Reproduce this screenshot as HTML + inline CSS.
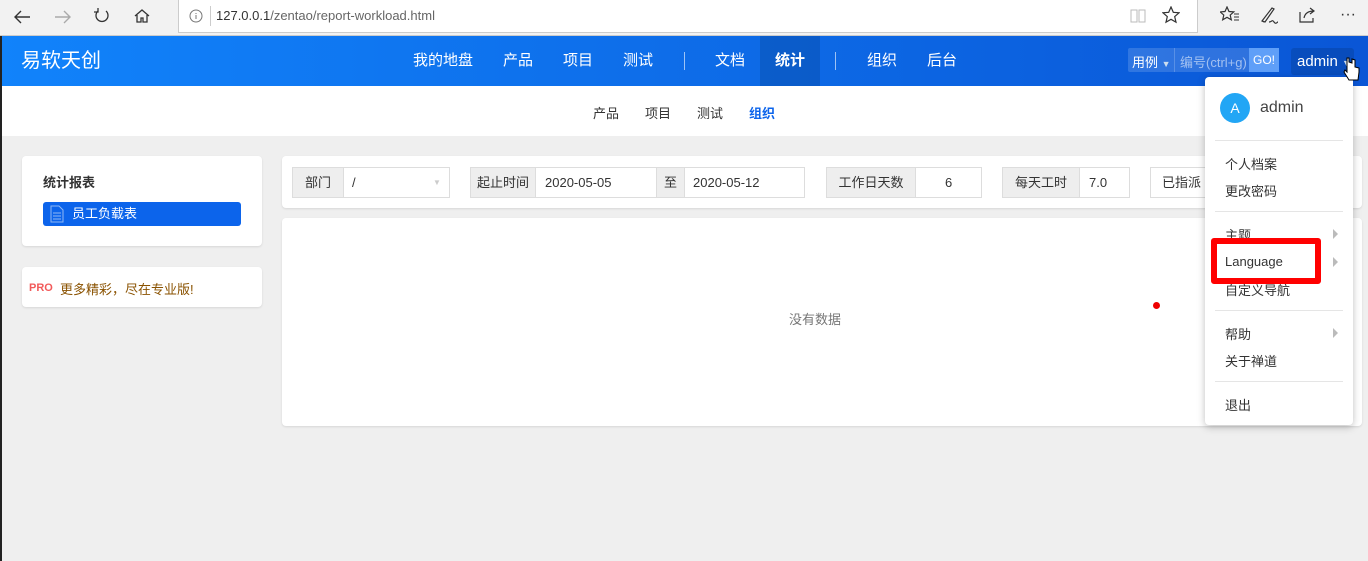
<!DOCTYPE html>
<html><head><meta charset="utf-8"><style>
*{margin:0;padding:0;box-sizing:border-box}
body{width:1368px;height:561px;overflow:hidden;background:#efefef;font-family:"Liberation Sans","Noto Sans CJK SC",sans-serif;font-size:13px;color:#333;position:relative}
.abs{position:absolute}
#bar{left:0;top:0;width:1368px;height:36px;background:#f2f2f2;border-bottom:1px solid #ccc}
#addr{left:178px;top:0;width:1020px;height:33px;background:#fff;border:1px solid #ccc;border-top:none}
#hdr{left:0;top:36px;width:1368px;height:50px;background:linear-gradient(90deg,#1183fb,#0a56d6)}
#hdr .n{position:absolute;top:0;line-height:50px;color:#fff;font-size:15px}
#sub{left:0;top:86px;width:1368px;height:50px;background:#fff}
#sub span{position:absolute;top:17px;font-size:13px;color:#333}
.card{position:absolute;background:#fff;border-radius:4px;box-shadow:0 1px 2px rgba(0,0,0,.1)}
.ig{position:absolute;top:167px;height:31px;border:1px solid #ddd;background:#fff;font-size:13px}
.ig .l{position:absolute;top:0;height:29px;line-height:29px;background:#eee;text-align:center;color:#333}
.ig .v{position:absolute;top:0;line-height:29px}
.menu{left:1205px;top:77px;width:148px;height:348px;background:#fff;border-radius:4px;box-shadow:0 2px 8px rgba(0,0,0,.25)}
.mi{position:absolute;left:20px;font-size:13px;color:#333}
.sep{position:absolute;left:10px;width:128px;height:1px;background:#e5e5e5}
.tri{position:absolute;left:128px;width:0;height:0;border-left:5px solid #bbb;border-top:5px solid transparent;border-bottom:5px solid transparent}
</style></head><body>
<div id="bar" class="abs">
<svg class="abs" style="left:12px;top:8px" width="20" height="18"><path d="M18 9H3M9 3L3 9l6 6" stroke="#333" stroke-width="1.4" fill="none"/></svg>
<svg class="abs" style="left:53px;top:8px" width="20" height="18"><path d="M2 9h15M11 3l6 6-6 6" stroke="#aaa" stroke-width="1.4" fill="none"/></svg>
<svg class="abs" style="left:93px;top:7px" width="18" height="18"><path d="M13 4a6 6 0 1 1-8 0M5 1v4H1" stroke="#333" stroke-width="1.3" fill="none"/></svg>
<svg class="abs" style="left:133px;top:7px" width="18" height="18"><path d="M2 9L9 3l7 6M4 8v7h4v-4h2v4h4V8" stroke="#333" stroke-width="1.3" fill="none"/></svg>
</div>
<div id="addr" class="abs">
<svg class="abs" style="left:10px;top:9px" width="14" height="14"><circle cx="7" cy="7" r="6" stroke="#777" fill="none"/><path d="M7 6v4M7 4v1" stroke="#777"/></svg>
<div class="abs" style="left:31px;top:6px;height:20px;border-left:1px solid #ccc"></div>
<div class="abs" style="left:37px;top:8px;font-size:13px;color:#333">127.0.0.1<span style="color:#666">/zentao/report-workload.html</span></div>
<svg class="abs" style="left:951px;top:8px" width="16" height="16"><path d="M1 2h6v12H1zM9 2h6v12H9z" stroke="#bbb" fill="none"/></svg>
<svg class="abs" style="left:983px;top:6px" width="18" height="18"><path d="M9 1l2.3 5.3 5.7.5-4.3 3.8 1.3 5.6L9 13.3 4 16.2l1.3-5.6L1 6.8l5.7-.5z" stroke="#333" stroke-width="1.2" fill="none"/></svg>
</div>
<svg class="abs" style="left:1220px;top:6px" width="20" height="18"><path d="M7 1l2 4.5 4.8.4-3.6 3.2 1.1 4.7L7 11.3 2.7 13.8l1.1-4.7L.2 5.9 5 5.5z" stroke="#333" stroke-width="1.2" fill="none"/><path d="M14 8h5M14 11h5M14 14h5" stroke="#333"/></svg>
<svg class="abs" style="left:1259px;top:5px" width="20" height="20"><path d="M3 16L13 3l2 1-9 13zM3 16l2 1M10 17c3 0 3-3 5 0s3 0 4 0" stroke="#333" stroke-width="1.2" fill="none"/></svg>
<svg class="abs" style="left:1298px;top:6px" width="20" height="18"><path d="M2 6v10h13v-4M6 12c1-5 5-7 10-7M12 2l4 3-4 3" stroke="#333" stroke-width="1.2" fill="none"/></svg>
<span class="abs" style="left:1340px;top:6px;font-size:16px;color:#333">···</span>
<div id="hdr" class="abs">
<div class="n" style="left:21px;font-size:20px">易软天创</div>
<div class="n" style="left:413px">我的地盘</div>
<div class="n" style="left:503px">产品</div>
<div class="n" style="left:563px">项目</div>
<div class="n" style="left:623px">测试</div>
<div class="abs" style="left:684px;top:16px;height:18px;border-left:1px solid rgba(255,255,255,.6)"></div>
<div class="n" style="left:715px">文档</div>
<div class="abs" style="left:760px;top:0;width:60px;height:50px;background:rgba(0,0,0,.12)"></div>
<div class="n" style="left:775px;font-weight:bold">统计</div>
<div class="abs" style="left:835px;top:16px;height:18px;border-left:1px solid rgba(255,255,255,.6)"></div>
<div class="n" style="left:867px">组织</div>
<div class="n" style="left:927px">后台</div>
<div class="abs" style="left:1128px;top:12px;width:151px;height:24px;background:rgba(255,255,255,.15);border-radius:2px"></div>
<div class="abs" style="left:1132px;top:16px;color:#fff;font-size:13px">用例 <span style="font-size:9px;color:#cde">▼</span></div>
<div class="abs" style="left:1174px;top:12px;height:24px;border-left:1px solid rgba(255,255,255,.2)"></div>
<div class="abs" style="left:1180px;top:16px;color:rgba(255,255,255,.55);font-size:13px">编号(ctrl+g)</div>
<div class="abs" style="left:1249px;top:12px;width:30px;height:24px;background:#5f9ff8;color:#fff;font-size:12px;line-height:24px;text-align:center">GO!</div>
<div class="abs" style="left:1291px;top:12px;width:63px;height:27px;background:rgba(0,0,0,.12);border-radius:3px"></div>
<div class="abs" style="left:1297px;top:17px;color:#fff;font-size:15px">admin <span style="font-size:9px;color:#cde">▼</span></div>
</div>
<div id="sub" class="abs">
<span style="left:593px">产品</span><span style="left:645px">项目</span><span style="left:697px">测试</span><span style="left:749px;color:#0c64eb;font-weight:bold">组织</span>
</div>
<div class="card" style="left:22px;top:156px;width:240px;height:90px">
<div class="abs" style="left:21px;top:16px;font-weight:bold;font-size:13px">统计报表</div>
<div class="abs" style="left:21px;top:46px;width:198px;height:24px;background:#0c64eb;border-radius:3px;color:#fff;line-height:24px;padding-left:29px">员工负载表</div>
<svg class="abs" style="left:28px;top:49px" width="14" height="18"><path d="M1 1h8l4 4v12H1z M3 8h8M3 11h8M3 14h8" stroke="#8fb8f5" fill="none"/></svg>
</div>
<div class="card" style="left:22px;top:267px;width:240px;height:40px">
<div class="abs" style="left:7px;top:15px;color:#f25a5a;font-size:11px;font-weight:bold">PRO</div>
<div class="abs" style="left:38px;top:12px;color:#8a5200;font-size:13px">更多精彩，尽在专业版!</div>
</div>
<div class="card" style="left:282px;top:156px;width:1080px;height:52px"></div>
<div class="ig" style="left:292px;width:158px"><div class="l" style="left:0;width:51px;border-right:1px solid #ddd">部门</div><div class="v" style="left:59px">/</div><div class="v" style="left:140px;color:#ccc;font-size:8px">▼</div></div>
<div class="ig" style="left:470px;width:335px"><div class="l" style="left:0;width:65px;border-right:1px solid #ddd">起止时间</div><div class="v" style="left:74px">2020-05-05</div><div class="l" style="left:185px;width:29px;border-left:1px solid #ddd;border-right:1px solid #ddd">至</div><div class="v" style="left:222px">2020-05-12</div></div>
<div class="ig" style="left:826px;width:156px"><div class="l" style="left:0;width:89px;border-right:1px solid #ddd">工作日天数</div><div class="v" style="left:118px">6</div></div>
<div class="ig" style="left:1002px;width:128px"><div class="l" style="left:0;width:77px;border-right:1px solid #ddd">每天工时</div><div class="v" style="left:86px">7.0</div></div>
<div class="ig" style="left:1150px;width:70px"><div class="v" style="left:11px">已指派</div></div>
<div class="card" style="left:282px;top:218px;width:1080px;height:208px">
<div class="abs" style="left:507px;top:91px;color:#777;font-size:13px">没有数据</div>
<div class="abs" style="left:871px;top:84px;width:7px;height:7px;border-radius:50%;background:#e00"></div>
</div>
<div class="menu abs">
<div class="abs" style="left:15px;top:16px;width:30px;height:30px;border-radius:50%;background:#22a6f5;color:#fff;text-align:center;line-height:30px;font-size:14px">A</div>
<div class="abs" style="left:55px;top:22px;font-size:16px;color:#444">admin</div>
<div class="sep" style="top:63px"></div>
<div class="mi" style="top:77px">个人档案</div>
<div class="mi" style="top:104px">更改密码</div>
<div class="sep" style="top:134px"></div>
<div class="mi" style="top:148px">主题</div><div class="tri" style="top:152px"></div>
<div class="mi" style="top:177px">Language</div><div class="tri" style="top:180px"></div>
<div class="mi" style="top:203px">自定义导航</div>
<div class="sep" style="top:233px"></div>
<div class="mi" style="top:247px">帮助</div><div class="tri" style="top:251px"></div>
<div class="mi" style="top:274px">关于禅道</div>
<div class="sep" style="top:304px"></div>
<div class="mi" style="top:318px">退出</div>
</div>
<div class="abs" style="left:1211px;top:238px;width:110px;height:46px;border:6px solid #f00;border-radius:3px"></div>
<div class="abs" style="left:0;top:36px;width:2px;height:525px;background:#222"></div>
<svg class="abs" style="left:1343px;top:56px" width="18" height="26"><path d="M4 2v14l-2-2-1 2 5 8h9l1-8v-4l-4-1V4l-3-1v4L6 6V2z" fill="#fff" stroke="#000" stroke-width="1"/></svg>
</body></html>
